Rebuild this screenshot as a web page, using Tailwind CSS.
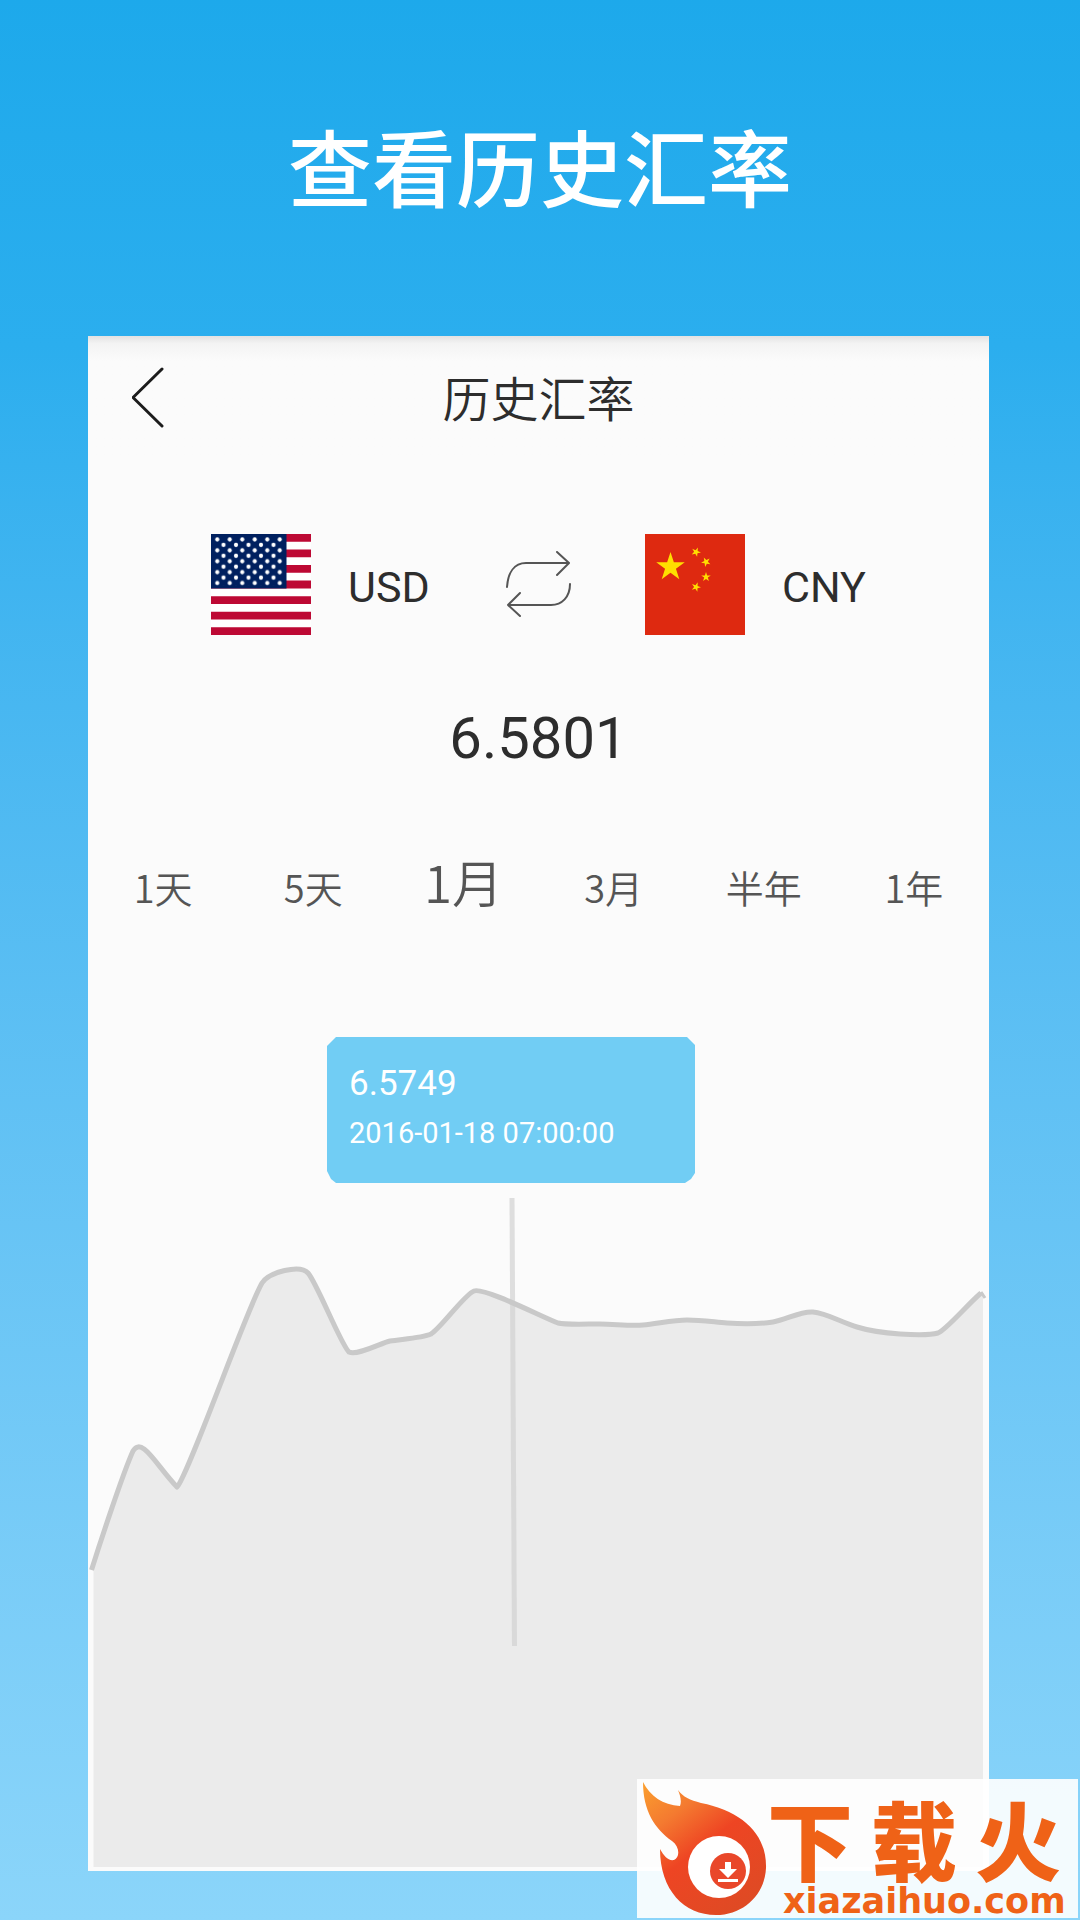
<!DOCTYPE html>
<html lang="zh-CN">
<head>
  <meta charset="UTF-8">
  <meta name="viewport" content="width=device-width, initial-scale=1.0">
  <title>历史汇率</title>
  <script src="https://cdn.jsdelivr.net/npm/@tailwindcss/browser@4"></script>
  <style>
    body { font-family: Roboto, "Noto Sans CJK SC", sans-serif; }
    .cjk { font-family: "Noto Sans CJK SC", sans-serif; }
    .wordmark { font-family: "DejaVu Sans", sans-serif; }
  </style>
</head>
<body class="relative min-h-screen bg-linear-to-b from-[#1da9eb] via-[#2baeee] via-18% to-[#8bd5fa]">
  <!-- Banner -->
  <header class="h-[336px] flex justify-center pt-[105px]">
    <h1 class="cjk text-[84px] leading-[120px] font-medium text-white">查看历史汇率</h1>
  </header>

  <!-- Phone screen -->
  <main class="ml-[88px] mr-[91px] bg-[#fbfbfb] text-[#2d2d2d]">
    <!-- Title bar -->
    <div class="relative h-[124px] flex items-center justify-center bg-linear-to-b from-[#e2e2e2] via-[#f3f3f3] via-6% to-[#fbfbfb] to-20%">
      <button type="button" aria-label="返回" class="absolute left-[44px] top-[30px]">
        <svg class="w-8 h-16" viewBox="0 0 32 64" fill="none" stroke="#1c1c1c" stroke-width="3" stroke-linecap="round" stroke-linejoin="round"><path d="M30 3 1 31.500 30 60"/></svg>
      </button>
      <h2 class="cjk text-[48px] leading-[60px] pb-1 font-[350]">历史汇率</h2>
    </div>

    <!-- Currency pair -->
    <div class="flex items-center pl-[123px] pt-[74px] text-[43px] leading-[50px]">
      <svg class="w-[100px] h-[101px]" viewBox="0 0 100 100" preserveAspectRatio="none" role="img" aria-label="美国">
        <defs>
          <pattern id="stars" width="12.5" height="10.8" patternUnits="userSpaceOnUse">
            <g fill="#fff"><circle cx="6.25" cy="5.4" r="2.100"/><circle cx="0" cy="0" r="2.100"/><circle cx="12.5" cy="0" r="2.100"/><circle cx="0" cy="10.8" r="2.100"/><circle cx="12.5" cy="10.8" r="2.100"/></g>
          </pattern>
        </defs>
        <path fill="#fff" d="M0 0h100v100H0z"/>
        <path stroke="#bd0934" stroke-width="7.69" d="M0 3.850h100M0 19.230h100M0 34.620h100M0 50h100M0 65.380h100M0 80.770h100M0 96.150h100"/>
        <path fill="#00205f" d="M0 0h75.500v53.850H0z"/>
        <path fill="url(#stars)" d="M3 3h69v48H3z"/>
      </svg>
      <span class="ml-[37px] w-[121px] pt-1">USD</span>
      <button type="button" aria-label="交换货币" class="ml-9 w-[66px]">
        <svg class="w-[66px] h-[68px]" viewBox="0 0 66 68" fill="none" stroke="#555" stroke-width="2" stroke-linecap="round" stroke-linejoin="round">
          <path d="M2 36C3 22 9 12 21 12h42M52 1l12 11-12 12M65 33c0 13-8 21-19 21H3M15 42 3 54l12 11"/>
        </svg>
      </button>
      <svg class="ml-[74px] w-[100px] h-[101px]" viewBox="0 0 100 101" role="img" aria-label="中国">
        <defs><path id="star" d="M0-1 .2245-.309.951-.309.363.118.588.809 0 .382-.588.809-.363.118-.951-.309-.2245-.309z"/></defs>
        <path fill="#de2910" d="M0 0h100v101H0z"/>
        <g fill="#ffde00">
          <use href="#star" transform="translate(25.500 33) scale(15)"/>
          <use href="#star" transform="translate(51 18) rotate(23) scale(5)"/>
          <use href="#star" transform="translate(61 28) rotate(46) scale(5)"/>
          <use href="#star" transform="translate(61 43) scale(5)"/>
          <use href="#star" transform="translate(51 53) rotate(20) scale(5)"/>
        </g>
      </svg>
      <span class="ml-[37px] pt-1">CNY</span>
    </div>

    <p class="pt-[67px] text-center text-[58px] leading-[72px]">6.5801</p>

    <!-- Period tabs -->
    <nav class="cjk mt-[67px] h-[196px] grid grid-cols-6 items-baseline text-[38px] leading-[80px] font-[350] text-[#555]">
      <button type="button">1天</button>
      <button type="button">5天</button>
      <button type="button" class="text-[51px]" aria-current="true">1月</button>
      <button type="button">3月</button>
      <button type="button">半年</button>
      <button type="button">1年</button>
    </nav>

    <!-- Rate chart -->
    <section class="relative">
      <svg class="block w-full" viewBox="88 1037 901 834" fill="none">
        <path fill="#ebebeb" d="M93.500 1565C102 1538 123 1473 133 1451 142 1436 156 1465 177 1487 188 1476 247 1308 262 1283 269 1272 300 1264 308 1273 317 1283 341 1345 349 1352 357 1356 381 1343 390 1341 403 1339 422 1338 431 1334 441 1328 464 1295 474 1291 484 1287 542 1317 558 1323 565 1325 586 1324 600 1324S630 1326 643 1325 673 1320 687 1320 714 1322 727 1323 760 1324 773 1322 800 1311 813 1312 841 1322 857 1327 885 1333 900 1334 931 1335 938 1333C946 1330 970 1303 983 1293V1867H93.500z"/>
        <path stroke="#d2d2d2" stroke-opacity=".7" stroke-width="5" d="M512 1198 514.500 1646"/>
        <path stroke="#c9c9c9" stroke-width="5" stroke-linejoin="round" d="M91.500 1570C100 1543 123 1473 133 1451 142 1436 156 1465 177 1487 188 1476 247 1308 262 1283 269 1272 300 1264 308 1273 317 1283 341 1345 349 1352 357 1356 381 1343 390 1341 403 1339 422 1338 431 1334 441 1328 464 1295 474 1291 484 1287 542 1317 558 1323 565 1325 586 1324 600 1324S630 1326 643 1325 673 1320 687 1320 714 1322 727 1323 760 1324 773 1322 800 1311 813 1312 841 1322 857 1327 885 1333 900 1334 931 1335 938 1333C946 1330 968 1304 981 1293"/>
        <path stroke="#c9c9c9" stroke-width="3" d="M981 1292 985 1298"/>
      </svg>
      <div class="absolute left-[239px] top-0 w-[368px] h-[146px] pl-[22px] pt-[25px] bg-[#71cdf4] text-white [clip-path:polygon(9px_0,calc(100%-8px)_0,100%_8px,100%_calc(100%-10px),calc(100%-4px)_calc(100%-4px),calc(100%-10px)_100%,9px_100%,4px_calc(100%-4px),0_calc(100%-12px),0_9px)]">
        <p class="text-[35px] leading-[44px]">6.5749</p>
        <p class="text-[29px] leading-[54px]">2016-01-18 07:00:00</p>
      </div>
    </section>
  </main>
  <div class="h-12"></div>

  <!-- Site badge -->
  <a href="#" class="absolute right-[2px] bottom-[2px] w-[441px] h-[139px] flex bg-white/90 text-[#ef6217]">
    <svg class="w-[130px] h-[139px] shrink-0" viewBox="0 0 130 139">
      <defs>
        <linearGradient id="flame" x1="0" y1="0" x2=".7" y2="1"><stop offset="0" stop-color="#fba02f"/><stop offset=".28" stop-color="#f47a30"/><stop offset=".55" stop-color="#ee4523"/><stop offset="1" stop-color="#df4a24"/></linearGradient>
      </defs>
      <path fill="url(#flame)" d="M6 3C13 17 26 26 43 27 45 22 43 16 41 11 46 18 53 21 64 24 105 32 130 55 129 89 128 115 107 136 79 136 47 136 23 111 23 70 27 77 31 82 37 81 43 78 43 68 35 62 18 50 6 32 6 3z"/>
      <circle cx="82" cy="88" r="31" fill="#fff"/>
      <circle cx="91" cy="92" r="18" fill="#e9472a"/>
      <path fill="#fff" d="M88 83h6v7h6l-9 9-9-9h6zM81 100h20v3H81z"/>
    </svg>
    <span class="flex flex-col pt-4">
      <span class="cjk flex gap-[18px] text-[86px] leading-[86px] font-black"><span>下</span><span>载</span><span>火</span></span>
      <span class="wordmark pl-4 pt-1 text-[35px] leading-[32px] font-bold">xiazaihuo.com</span>
    </span>
  </a>
</body>
</html>
